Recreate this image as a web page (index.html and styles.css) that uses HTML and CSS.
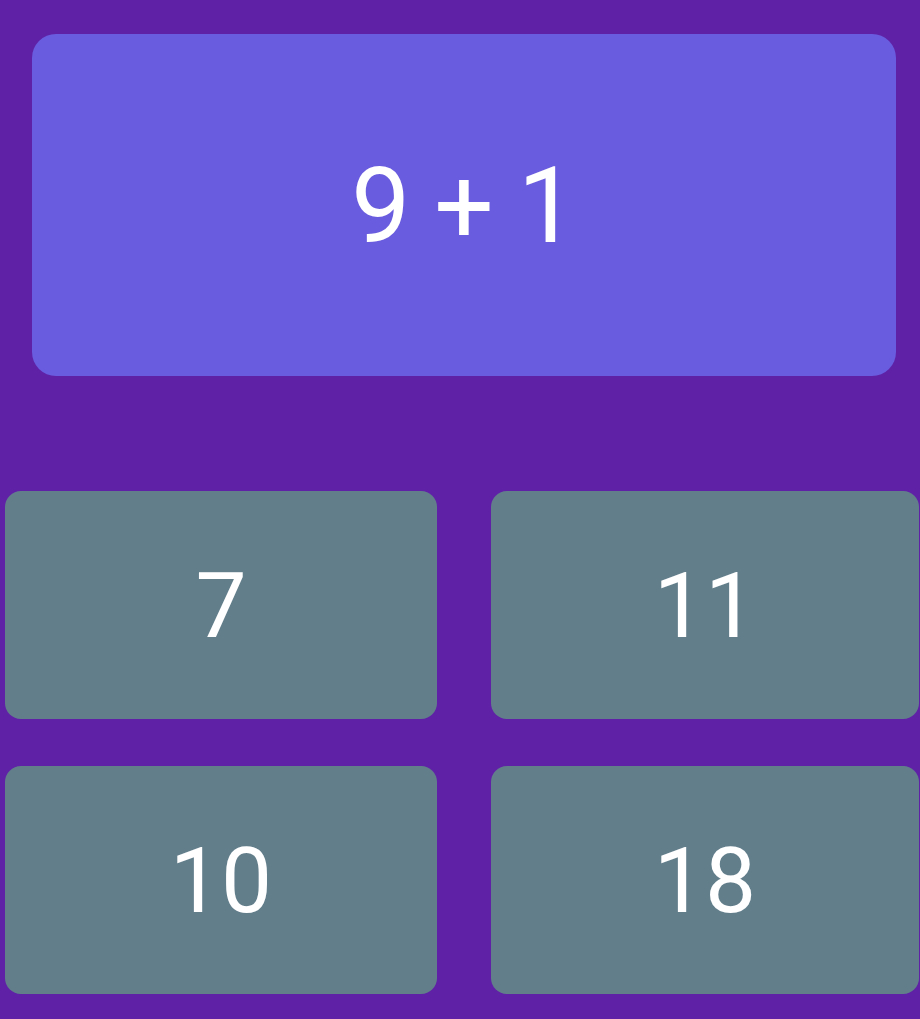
FILE: index.html
```html
<!DOCTYPE html>
<html>
<head>
<meta charset="utf-8">
<link rel="stylesheet" href="styles.css">
</head>
<body>
<div class="app">
  <div class="question">9 + 1</div>
  <div class="answers">
    <div class="answer">7</div>
    <div class="answer">11</div>
    <div class="answer">10</div>
    <div class="answer">18</div>
  </div>
</div>
</body>
</html>
```
FILE: styles.css
```css
html, body {
  margin: 0;
  padding: 0;
  background: #5f22a6;
  height: 100%;
}
.app {
  width: 920px;
  height: 1019px;
  font-family: Roboto, "Noto Sans", sans-serif;
  color: #ffffff;
  overflow: hidden;
}
.question {
  margin: 34px 24px 0 32px;
  height: 342px;
  background: #6a5cde;
  border-radius: 24px;
  display: flex;
  align-items: center;
  justify-content: center;
  font-size: 105px;
  line-height: 1;
  word-spacing: -2px;
  padding-top: 2px;
  box-sizing: border-box;
}
.answers {
  margin-top: 115px;
  padding-left: 5px;
  display: grid;
  grid-template-columns: 432px 428px;
  grid-auto-rows: 228px;
  column-gap: 54px;
  row-gap: 47px;
}
.answer {
  background: #627e8b;
  border-radius: 16px;
  display: flex;
  align-items: center;
  justify-content: center;
  font-size: 91px;
  line-height: 1;
  padding-top: 2px;
  box-sizing: border-box;
}
```
